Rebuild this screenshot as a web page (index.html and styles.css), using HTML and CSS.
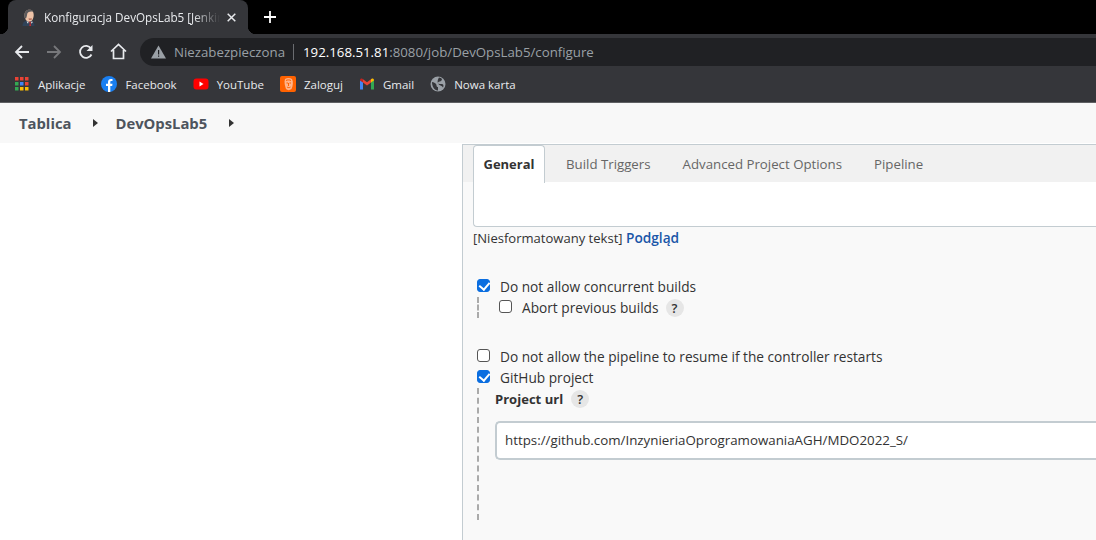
FILE: index.html
```html
<!doctype html>
<html>
<head>
<meta charset="utf-8">
<title>Konfiguracja DevOpsLab5</title>
<link rel="stylesheet" href="styles.css">
</head>
<body>
<div class="tabstrip">
	<div class="tab">
		<svg class="tab-icon" width="16" height="17" viewBox="0 0 16 17"><path d="M1.500 17c0-3 1.500-5 4-5.500l5 .5c2 .5 3 2.500 3 5z" fill="#2f4258"/><path d="M3.500 6.500C3.500 2.500 6 .8 8.500.8s4.500 2 4.200 6c-.3 3-1.700 6-4.400 6-2.500 0-4.800-2.800-4.800-6.300z" fill="#eec3a8"/><path d="M3.500 8C2.800 3 5.500.5 8.500.5c2 0 3.500 1 3.800 2.300C10 2 7 2.500 6.300 4.500 6 6 5.800 8 5 9.500 4.200 9.500 3.700 9 3.500 8z" fill="#5b5a5c"/><path d="M7.500 9.500h3.500l-.5 1.200H8z" fill="#a65b4a"/><path d="M7.500 12.500l2.500.2-.5 1.300.6 3H8.300l.5-3z" fill="#c62b2b"/><path d="M5.500 12.500l2 .2-.5 2zM10 12.700l2 0-1.500 2z" fill="#e9e9e9"/></svg>
		<span class="tab-title">Konfiguracja DevOpsLab5 [Jenkins]</span>
		<svg class="tab-close" width="9" height="9" viewBox="0 0 9 9"><path d="M.7.7l7.600 7.600M8.300.7L.7 8.300" stroke="#e8eaed" stroke-width="1.500"/></svg>
	</div>
	<svg class="new-tab" width="12" height="12" viewBox="0 0 12 12"><path d="M6 0v12M0 6h12" stroke="#fff" stroke-width="1.800"/></svg>
</div>

<div class="toolbar">
	<svg class="tool" width="16" height="16" viewBox="0 0 16 16"><path d="M15 8H2M8 2L2 8l6 6" fill="none" stroke="#e8eaed" stroke-width="1.800"/></svg>
	<svg class="tool" width="16" height="16" viewBox="0 0 16 16"><path d="M1 8h13M8 2l6 6-6 6" fill="none" stroke="#77787b" stroke-width="1.800"/></svg>
	<svg class="tool" width="16" height="16" viewBox="0 0 16 16"><path d="M13.500 10.500A6 6 0 1 1 13 4.500" fill="none" stroke="#e8eaed" stroke-width="1.800"/><path d="M14.500 1v6h-6z" fill="#e8eaed"/></svg>
	<svg class="tool" width="17" height="17" viewBox="0 0 17 17"><path d="M1 8.500L8.500 1.500 16 8.500M3.500 7v8.500h10V7" fill="none" stroke="#e8eaed" stroke-width="1.700"/></svg>
	<div class="address">
		<svg width="15" height="14" viewBox="0 0 15 14"><path d="M7.500 0.500L15 13.500H0z" fill="#9aa0a6"/><path d="M7 5h1.200v4.500H7zM7 10.500h1.200v1.300H7z" fill="#202124"/></svg>
		<span class="insecure">Niezabezpieczona</span>
		<span class="address-sep"></span>
		<span class="url"><b>192.168.51.81</b>:8080/job/DevOpsLab5/configure</span>
	</div>
</div>

<div class="bookmarks">
	<div class="bookmark">
		<svg class="apps" width="14" height="14" viewBox="0 0 14 14">
			<path d="M0 0h3.500v3.500H0z" fill="#ea4335"/><path d="M5 0h3.500v3.500H5z" fill="#ea4335"/><path d="M10 0h3.500v3.500H10z" fill="#ea4335"/>
			<path d="M0 5h3.500v3.500H0z" fill="#34a853"/><path d="M5 5h3.500v3.500H5z" fill="#4285f4"/><path d="M10 5h3.500v3.500H10z" fill="#ea4335"/>
			<path d="M0 10h3.500v3.500H0z" fill="#34a853"/><path d="M5 10h3.500v3.500H5z" fill="#fbbc04"/><path d="M10 10h3.500v3.500H10z" fill="#fbbc04"/>
		</svg>
		Aplikacje
	</div>
	<div class="bookmark">
		<svg width="16" height="16" viewBox="0 0 16 16"><circle cx="8" cy="8" r="8" fill="#1a7ff0"/><path d="M7 16V10H5V7.700h2V6c0-2 1.200-3 3-3l1.500.1v2h-1c-1 0-1.200.5-1.200 1.200v1.400h2.200L11.200 10H9.300v6z" fill="#fff"/></svg>
		Facebook
	</div>
	<div class="bookmark">
		<svg width="16" height="16" viewBox="0 0 16 16"><rect x="0.500" y="2.500" width="15" height="11" rx="3" fill="#f00"/><path d="M6.500 5.500v5l4-2.500z" fill="#fff"/></svg>
		YouTube
	</div>
	<div class="bookmark">
		<svg width="16" height="16" viewBox="0 0 16 16"><rect width="16" height="16" rx="2" fill="#ff6200"/><path d="M5 3c2-1.200 5-1.200 7 0 1.500 2.500 1 7-.5 10-2 1.500-4 1.500-5.500 0C5 10 3.800 6 5 3z" fill="#ffb48a"/><path d="M6 4.500c1.500-.8 3.500-.8 5 0M6.500 7h1.500M9.500 7H11M8.500 7v3M7 11c1 .8 2.500.8 3.500 0" fill="none" stroke="#ff6200"/></svg>
		Zaloguj
	</div>
	<div class="bookmark">
		<svg width="16" height="16" viewBox="0 0 16 16"><path d="M1 13.500V4l3 2.200v7.300z" fill="#4285f4"/><path d="M12 13.500V6.200L15 4v9.500z" fill="#34a853"/><path d="M4 6.500V3.200L8 6.200l4-3v3.300L8 9.500z" fill="#ea4335"/><path d="M1 4.500C1 2.500 3 2 4 3.200V6.500z" fill="#c5221f"/><path d="M12 3.200C13 2 15 2.500 15 4.500L12 6.500z" fill="#fbbc04"/></svg>
		Gmail
	</div>
	<div class="bookmark">
		<svg width="16" height="16" viewBox="0 0 16 16"><circle cx="8" cy="8" r="7.500" fill="#9aa0a6"/><path d="M2 6c2 0 3 1 4 2s0 3 2 3v3.500C5 15 2 11 2 6zM9 1.500c3 .5 3.500 1.500 2.500 3S9 5 8 6.500s2 1.500 4 1.500 1.500 3 1 3.500c-1-2-4-2-5-4S8 3 9 1.500z" fill="#35363a"/></svg>
		Nowa karta
	</div>
</div>

<div class="breadcrumbs">
	<span class="crumb">Tablica</span>
	<span class="crumb-arrow"></span>
	<span class="crumb">DevOpsLab5</span>
	<span class="crumb-arrow"></span>
</div>

<div class="main">
	<div class="side"></div>
	<div class="config">
		<div class="tabbar">
			<div class="config-tab active">General</div>
			<div class="config-tab">Build Triggers</div>
			<div class="config-tab">Advanced Project Options</div>
			<div class="config-tab">Pipeline</div>
		</div>
		<div class="editor"></div>
		<div class="editor-foot">[Niesformatowany tekst] <a class="preview">Podgląd</a></div>

		<div class="check-row first">
			<span class="box checked"></span>
			<span>Do not allow concurrent builds</span>
		</div>
		<div class="nested short">
			<div class="check-row sub">
				<span class="box"></span>
				<span>Abort previous builds</span>
				<span class="help">?</span>
			</div>
		</div>

		<div class="check-row second">
			<span class="box"></span>
			<span>Do not allow the pipeline to resume if the controller restarts</span>
		</div>
		<div class="check-row">
			<span class="box checked"></span>
			<span>GitHub project</span>
		</div>
		<div class="nested tall">
			<div class="field-label">Project url <span class="help">?</span></div>
			<div class="url-input">https://github.com/InzynieriaOprogramowaniaAGH/MDO2022_S/</div>
		</div>
	</div>
</div>
</body>
</html>
```

FILE: styles.css
```css
* { margin:0; padding:0; box-sizing:border-box; }
html, body { width:1096px; height:540px; overflow:hidden; }
body { font-family:"Open Sans","Noto Sans",sans-serif; background:#fff; color:#333; }

/* browser chrome */
.tabstrip { height:34px; background:#000; display:flex; align-items:flex-end; padding-left:8px; }
.tab { width:240px; height:34px; background:#35363a; border-radius:8px 8px 0 0; display:flex; align-items:center; padding:0 12px 0 13px; color:#e8eaed; font-size:11.7px; position:relative; }
.tab::before, .tab::after { content:""; position:absolute; bottom:0; width:8px; height:8px; }
.tab::before { left:-8px; background:radial-gradient(circle at 0 0, #000 8px, #35363a 8.5px); }
.tab::after { right:-8px; background:radial-gradient(circle at 100% 0, #000 8px, #35363a 8.5px); }
.tab-icon { flex:none; margin-right:7px; }
.tab-title { flex:1; white-space:nowrap; overflow:hidden; -webkit-mask-image:linear-gradient(to right, #000 85%, transparent); mask-image:linear-gradient(to right, #000 85%, transparent); }
.tab-close { flex:none; margin-left:7px; }
.new-tab { margin:0 0 11px 16px; }

.toolbar { height:32px; background:#35363a; display:flex; align-items:center; padding:3px 0 0 14px; }
.tool { flex:none; margin-right:16px; }
.address { flex:1; height:28px; margin-left:-3px; background:#202124; border-radius:14px 0 0 14px; display:flex; align-items:center; padding-left:11px; font-size:13.25px; white-space:nowrap; }
.insecure { color:#9aa0a6; margin-left:8px; }
.address-sep { width:1px; height:16px; background:#6a6c70; margin:0 9px 0 8px; }
.url { color:#9aa0a6; }
.url b { color:#fff; font-weight:400; }

.bookmarks { height:37px; background:#35363a; border-bottom:1px solid #5f6063; display:flex; align-items:center; padding-left:15px; gap:16px; color:#e8eaed; font-size:11.5px; }
.bookmark { display:flex; align-items:center; gap:8px; }
.apps { margin-right:1px; }

/* jenkins breadcrumbs */
.breadcrumbs { height:40px; background:#f8f8f8; display:flex; align-items:center; padding-left:19px; font-size:14.8px; font-weight:700; color:#4d545d; }
.crumb-arrow { width:0; height:0; border-left:5px solid #333; border-top:4px solid transparent; border-bottom:4px solid transparent; margin:0 17px 0 22px; }

.main { display:flex; height:398px; }
.side { width:462px; background:#fff; }
.config { flex:1; margin-top:1px; background:#f9f9f9; border-left:1px solid #c3ccd1; border-top:1px solid #c3ccd1; font-size:13.05px; color:#333; padding-left:10px; }

.tabbar { height:37px; background:#f1f1f1; margin-left:-10px; padding-left:10px; display:flex; gap:32px; }
.config-tab { font-size:13.25px; line-height:38px; color:#666; white-space:nowrap; }
.config-tab.active { font-size:13px; width:72px; height:38px; text-align:center; background:#fff; color:#333; font-weight:700; border:1px solid #c3ccd1; border-bottom:none; border-radius:4px 4px 0 0; margin-right:-11px; line-height:36px; }

.editor { height:45px; background:#fff; border:1px solid #c3ccd1; border-top:none; border-right:none; border-radius:0 0 0 4px; }
.editor-foot { margin-top:2px; height:18px; line-height:18px; color:#333; }
.preview { color:#1a56a8; font-weight:600; font-size:13.7px; }

.check-row { display:flex; align-items:center; height:21px; gap:10px; white-space:nowrap; font-size:13.7px; font-weight:500; color:#333; padding-left:4px; }
.check-row.first { margin-top:29px; }
.check-row.second { margin-top:28px; }
.box { flex:none; width:13px; height:13px; border:1px solid #555; border-radius:3px; background:#fff; position:relative; top:-1px; }
.box.checked { background:#0b6ee0; border-color:#0b6ee0; }
.box.checked::after { content:""; position:absolute; left:3px; top:0; width:5px; height:8px; border:solid #fff; border-width:0 2px 2px 0; transform:rotate(40deg); }

.nested { margin-left:4px; border-left:2px dashed #aaa; }
.nested.short { height:21px; padding-left:20px; }
.nested.short .check-row { padding-left:0; }
.nested.short .help { margin-left:-3px; }
.nested.tall { height:132px; padding:1px 0 0 16px; }

.help { width:18px; height:18px; border-radius:50%; background:#e6e6e6; color:#333; display:inline-flex; align-items:center; justify-content:center; font-size:13px; font-weight:600; }
.field-label { display:flex; align-items:center; gap:8px; height:20px; font-weight:700; color:#333; }
.url-input { margin-top:12px; height:39px; line-height:35px; background:#fff; border:2px solid #c3ccd1; border-right:none; border-radius:5px 0 0 5px; padding-left:8px; color:#333; font-size:13.33px; white-space:nowrap; }
```
